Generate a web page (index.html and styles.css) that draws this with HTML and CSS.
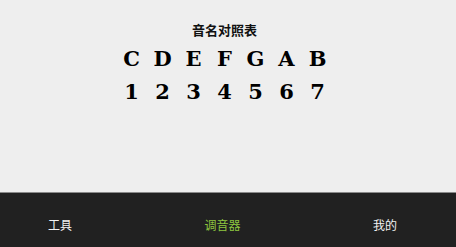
FILE: index.html
```html
<!DOCTYPE html>
<html lang="zh">
<head>
<meta charset="utf-8">
<title>调音器</title>
<link rel="stylesheet" href="styles.css">
</head>
<body>
<div class="app">
  <main class="content">
    <h1 class="title">音名对照表</h1>
    <div class="row notes">
      <span>C</span><span>D</span><span>E</span><span>F</span><span>G</span><span>A</span><span>B</span>
    </div>
    <div class="row nums">
      <span>1</span><span>2</span><span>3</span><span>4</span><span>5</span><span>6</span><span>7</span>
    </div>
  </main>
  <nav class="tabbar">
    <span class="tab">工具</span>
    <span class="tab active">调音器</span>
    <span class="tab">我的</span>
  </nav>
</div>
</body>
</html>
```
FILE: styles.css
```css
html, body {
  margin: 0;
  padding: 0;
  background: #eeeeee;
}
.app {
  width: 456px;
  height: 247px;
  display: flex;
  flex-direction: column;
  overflow: hidden;
}
.content {
  flex: 1;
  display: flex;
  flex-direction: column;
  align-items: center;
  padding: 21px 7px 0 0;
}
.title {
  margin: 0;
  font-family: "Noto Sans CJK SC", sans-serif;
  font-size: 13px;
  font-weight: 700;
  line-height: 18px;
  color: #111;
}
.row {
  display: grid;
  grid-template-columns: repeat(7, 31px);
  font-family: "DejaVu Serif", serif;
  font-weight: 700;
  font-size: 21px;
  line-height: 33px;
  color: #000;
  text-align: center;
}
.notes {
  margin-top: 3px;
}
.tabbar {
  border-top: 1px solid #8a8a8a;
  background: #212121;
  display: flex;
  justify-content: space-between;
  align-items: center;
  padding: 10px 59px 0 48px;
  box-sizing: border-box;
  height: 55px;
}
.tab {
  font-family: "Noto Sans CJK SC", sans-serif;
  font-size: 12px;
  line-height: 16px;
  color: #f2f2f2;
}
.tab.active {
  color: #8dc63f;
}
```
